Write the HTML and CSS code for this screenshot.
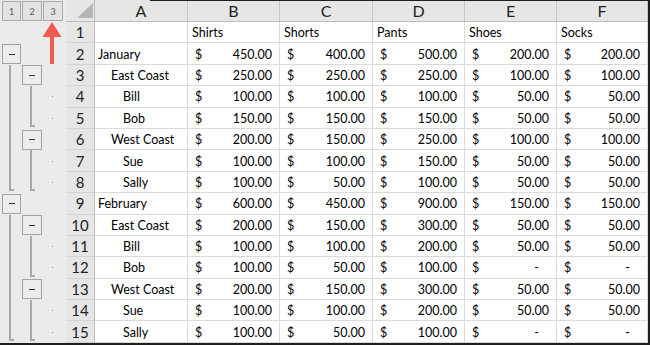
FILE: index.html
```html
<!DOCTYPE html>
<html>
<head>
<meta charset="utf-8">
<link rel="stylesheet" href="styles.css">
</head>
<body>
<div class="app">
  <div class="outline">
    <div class="lvl c1">1</div>
    <div class="lvl c2">2</div>
    <div class="lvl c3">3</div>

    <div class="btn c1 r2"><span class="minus"></span></div>
    <div class="br1 c1 g1"></div>
    <div class="btn c2 r3"><span class="minus"></span></div>
    <div class="br2 c2 g2"></div>
    <div class="dot c3 r4"></div>
    <div class="dot c3 r5"></div>
    <div class="btn c2 r6"><span class="minus"></span></div>
    <div class="br2 c2 g3"></div>
    <div class="dot c3 r7"></div>
    <div class="dot c3 r8"></div>

    <div class="btn c1 r9"><span class="minus"></span></div>
    <div class="br1 c1 g4"></div>
    <div class="btn c2 r10"><span class="minus"></span></div>
    <div class="br2 c2 g5"></div>
    <div class="dot c3 r11"></div>
    <div class="dot c3 r12"></div>
    <div class="btn c2 r13"><span class="minus"></span></div>
    <div class="br2 c2 g6"></div>
    <div class="dot c3 r14"></div>
    <div class="dot c3 r15"></div>
  </div>

  <div class="sheet">
    <div class="corner"><svg width="28" height="21" viewBox="0 0 28 21"><polygon points="11,18 27,18 27,3" fill="#b5b5b5"/></svg></div>
    <div class="ch">A</div><div class="ch">B</div><div class="ch">C</div><div class="ch">D</div><div class="ch">E</div><div class="ch">F</div>

    <div class="rh">1</div><div class="c"></div><div class="c hd">Shirts</div><div class="c hd">Shorts</div><div class="c hd">Pants</div><div class="c hd">Shoes</div><div class="c hd">Socks</div>

    <div class="rh">2</div><div class="c">January</div>
    <div class="c n"><span>$</span><span>450.00</span></div><div class="c n"><span>$</span><span>400.00</span></div><div class="c n"><span>$</span><span>500.00</span></div><div class="c n"><span>$</span><span>200.00</span></div><div class="c n"><span>$</span><span>200.00</span></div>

    <div class="rh">3</div><div class="c i1">East Coast</div>
    <div class="c n"><span>$</span><span>250.00</span></div><div class="c n"><span>$</span><span>250.00</span></div><div class="c n"><span>$</span><span>250.00</span></div><div class="c n"><span>$</span><span>100.00</span></div><div class="c n"><span>$</span><span>100.00</span></div>

    <div class="rh">4</div><div class="c i2">Bill</div>
    <div class="c n"><span>$</span><span>100.00</span></div><div class="c n"><span>$</span><span>100.00</span></div><div class="c n"><span>$</span><span>100.00</span></div><div class="c n"><span>$</span><span>50.00</span></div><div class="c n"><span>$</span><span>50.00</span></div>

    <div class="rh">5</div><div class="c i2">Bob</div>
    <div class="c n"><span>$</span><span>150.00</span></div><div class="c n"><span>$</span><span>150.00</span></div><div class="c n"><span>$</span><span>150.00</span></div><div class="c n"><span>$</span><span>50.00</span></div><div class="c n"><span>$</span><span>50.00</span></div>

    <div class="rh">6</div><div class="c i1">West Coast</div>
    <div class="c n"><span>$</span><span>200.00</span></div><div class="c n"><span>$</span><span>150.00</span></div><div class="c n"><span>$</span><span>250.00</span></div><div class="c n"><span>$</span><span>100.00</span></div><div class="c n"><span>$</span><span>100.00</span></div>

    <div class="rh">7</div><div class="c i2">Sue</div>
    <div class="c n"><span>$</span><span>100.00</span></div><div class="c n"><span>$</span><span>100.00</span></div><div class="c n"><span>$</span><span>150.00</span></div><div class="c n"><span>$</span><span>50.00</span></div><div class="c n"><span>$</span><span>50.00</span></div>

    <div class="rh">8</div><div class="c i2">Sally</div>
    <div class="c n"><span>$</span><span>100.00</span></div><div class="c n"><span>$</span><span>50.00</span></div><div class="c n"><span>$</span><span>100.00</span></div><div class="c n"><span>$</span><span>50.00</span></div><div class="c n"><span>$</span><span>50.00</span></div>

    <div class="rh">9</div><div class="c">February</div>
    <div class="c n"><span>$</span><span>600.00</span></div><div class="c n"><span>$</span><span>450.00</span></div><div class="c n"><span>$</span><span>900.00</span></div><div class="c n"><span>$</span><span>150.00</span></div><div class="c n"><span>$</span><span>150.00</span></div>

    <div class="rh">10</div><div class="c i1">East Coast</div>
    <div class="c n"><span>$</span><span>200.00</span></div><div class="c n"><span>$</span><span>150.00</span></div><div class="c n"><span>$</span><span>300.00</span></div><div class="c n"><span>$</span><span>50.00</span></div><div class="c n"><span>$</span><span>50.00</span></div>

    <div class="rh">11</div><div class="c i2">Bill</div>
    <div class="c n"><span>$</span><span>100.00</span></div><div class="c n"><span>$</span><span>100.00</span></div><div class="c n"><span>$</span><span>200.00</span></div><div class="c n"><span>$</span><span>50.00</span></div><div class="c n"><span>$</span><span>50.00</span></div>

    <div class="rh">12</div><div class="c i2">Bob</div>
    <div class="c n"><span>$</span><span>100.00</span></div><div class="c n"><span>$</span><span>50.00</span></div><div class="c n"><span>$</span><span>100.00</span></div><div class="c n"><span>$</span><span class="dash">-</span></div><div class="c n"><span>$</span><span class="dash">-</span></div>

    <div class="rh">13</div><div class="c i1">West Coast</div>
    <div class="c n"><span>$</span><span>200.00</span></div><div class="c n"><span>$</span><span>150.00</span></div><div class="c n"><span>$</span><span>300.00</span></div><div class="c n"><span>$</span><span>50.00</span></div><div class="c n"><span>$</span><span>50.00</span></div>

    <div class="rh">14</div><div class="c i2">Sue</div>
    <div class="c n"><span>$</span><span>100.00</span></div><div class="c n"><span>$</span><span>100.00</span></div><div class="c n"><span>$</span><span>200.00</span></div><div class="c n"><span>$</span><span>50.00</span></div><div class="c n"><span>$</span><span>50.00</span></div>

    <div class="rh">15</div><div class="c i2">Sally</div>
    <div class="c n"><span>$</span><span>100.00</span></div><div class="c n"><span>$</span><span>50.00</span></div><div class="c n"><span>$</span><span>100.00</span></div><div class="c n"><span>$</span><span class="dash">-</span></div><div class="c n"><span>$</span><span class="dash">-</span></div>
  </div>

  <div class="frame-top"></div>

  <svg class="arrow" width="22" height="46" viewBox="0 0 22 46">
    <polygon points="10,1 19.5,16 12,16 12,43 8,43 8,16 0.5,16" fill="#f25a4f"/>
  </svg>
</div>
</body>
</html>
```

FILE: styles.css
```css
html, body {
  margin: 0;
  padding: 0;
  background: #ffffff;
}

body {
  font-family: Lato, "Open Sans", sans-serif;
  color: #000;
}

.app {
  position: relative;
  display: flex;
  width: 650px;
  height: 345px;
  box-sizing: border-box;
  border-right: 2px solid #1f1f1f;
  border-bottom: 2px solid #1f1f1f;
  overflow: hidden;
}

.frame-top {
  position: absolute;
  left: 150px;
  right: 0;
  top: 0;
  height: 1px;
  background: #1f1f1f;
}

/* ---------- outline pane ---------- */
.outline {
  flex: none;
  width: 66px;
  background: #ebebeb;
  display: grid;
  grid-template-columns: 21px 21px 21px 3px;
  grid-template-rows: 22px repeat(15, 21.4px);
}

.c1 { grid-column: 1; }
.c2 { grid-column: 2; }
.c3 { grid-column: 3; }

.r2 { grid-row: 3; }
.r3 { grid-row: 4; }
.r4 { grid-row: 5; }
.r5 { grid-row: 6; }
.r6 { grid-row: 7; }
.r7 { grid-row: 8; }
.r8 { grid-row: 9; }
.r9 { grid-row: 10; }
.r10 { grid-row: 11; }
.r11 { grid-row: 12; }
.r12 { grid-row: 13; }
.r13 { grid-row: 14; }
.r14 { grid-row: 15; }
.r15 { grid-row: 16; }

.g1 { grid-row: 4 / 10; }
.g2 { grid-row: 5 / 7; }
.g3 { grid-row: 8 / 10; }
.g4 { grid-row: 11 / 17; }
.g5 { grid-row: 12 / 14; }
.g6 { grid-row: 15 / 17; }

.lvl {
  grid-row: 1;
  align-self: center;
  height: 20px;
  box-sizing: border-box;
  border: 1px solid #a9a9a9;
  background: #e3e3e3;
  font-size: 9px;
  color: #555;
  display: flex;
  align-items: center;
  justify-content: center;
}
.lvl.c1 { margin: 0 0 0 2px; width: 19px; }
.lvl.c2 { margin: 0 0 0 1px; width: 20px; }
.lvl.c3 { margin: 0 0 0 1px; width: 20px; }

.btn {
  align-self: center;
  width: 20px;
  height: 20px;
  box-sizing: border-box;
  border: 1px solid #a3a3a3;
  background: #ececec;
  display: flex;
  align-items: center;
  justify-content: center;
}
.btn.c1 { margin-left: 2px; width: 19px; }
.btn.c2 { margin-left: 1px; }

.minus {
  width: 6px;
  height: 1px;
  background: #333;
}

.br1, .br2 {
  box-sizing: border-box;
  width: 5px;
  border-left: 2px solid #a8a8a8;
  border-bottom: 2px solid #a8a8a8;
  margin-bottom: 2px;
}
.br1 { margin-left: 9px; }
.br2 { margin-left: 9px; }

.dot {
  align-self: center;
  justify-self: center;
  width: 1px;
  height: 1px;
  background: #8a8a8a;
}

/* ---------- sheet ---------- */
.sheet {
  flex: none;
  display: grid;
  grid-template-columns: 29px 93px 92px 93px 92px 92px 91px;
  grid-template-rows: 22px repeat(15, 21.4px);
}

.corner {
  background: #e6e6e6;
  border-right: 1px solid #bdbdbd;
  border-bottom: 1px solid #bdbdbd;
  box-sizing: border-box;
  overflow: hidden;
}
.corner svg { display: block; }

.ch {
  background: #e6e6e6;
  border-right: 1px solid #c8c8c8;
  border-bottom: 1px solid #bdbdbd;
  box-sizing: border-box;
  display: flex;
  align-items: center;
  justify-content: center;
  font-size: 16px;
  color: #222;
}

.rh {
  background: #e6e6e6;
  border-right: 1px solid #bdbdbd;
  border-bottom: 1px solid #d2d2d2;
  box-sizing: border-box;
  display: flex;
  align-items: center;
  justify-content: center;
  font-size: 15px;
  color: #222;
}

.c {
  border-right: 1px solid #dadada;
  border-bottom: 1px solid #dadada;
  box-sizing: border-box;
  display: flex;
  align-items: center;
  padding: 1px 3px 0;
  font-size: 12.5px;
  white-space: nowrap;
  overflow: hidden;
}

.hd { padding-left: 4px; }
.i1 { padding-left: 16px; }
.i2 { padding-left: 28px; }

.n {
  justify-content: space-between;
  padding-left: 7px;
  padding-right: 7px;
}

.dash {
  padding-right: 10px;
}

.arrow {
  position: absolute;
  left: 42px;
  top: 21px;
}
```
